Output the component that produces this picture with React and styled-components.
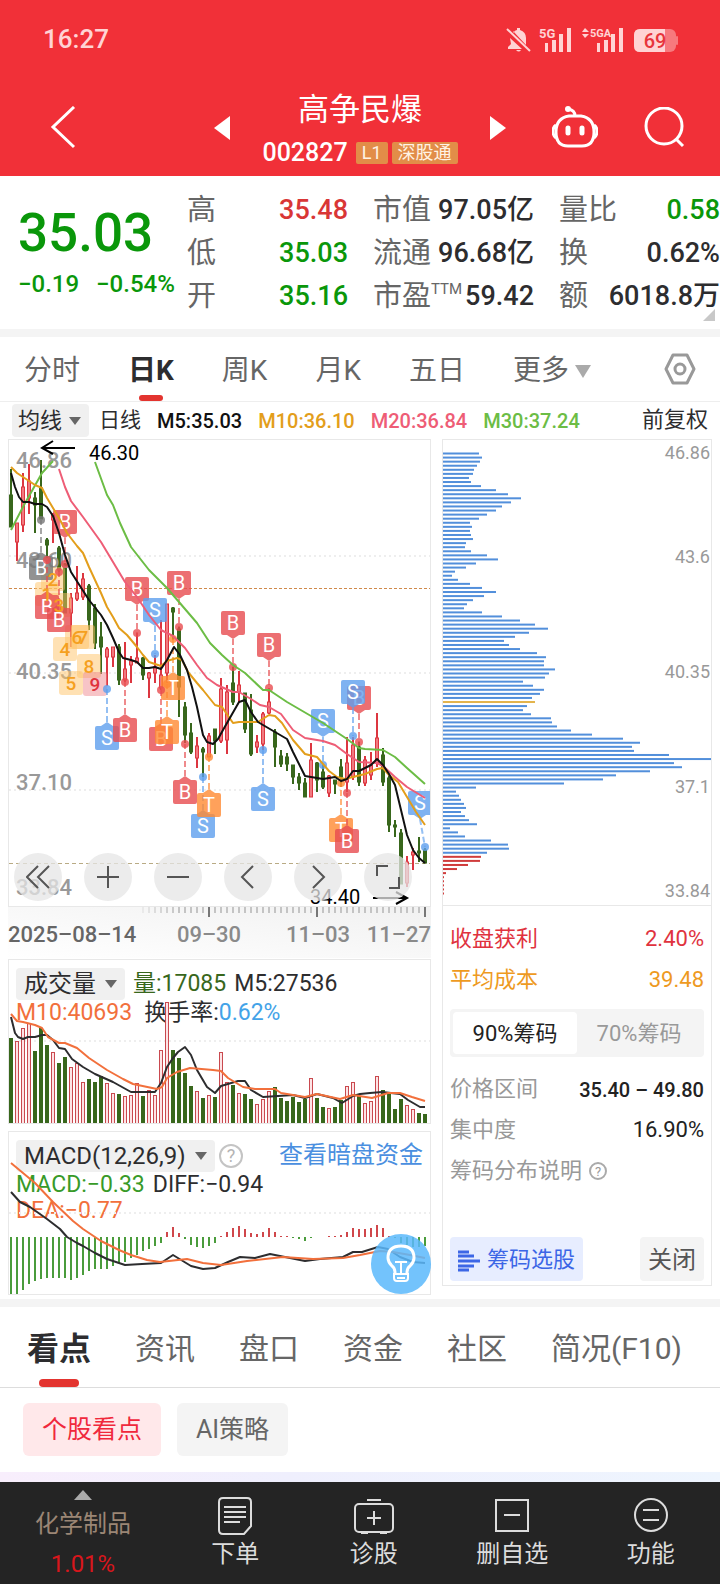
import React from "react";
import styled, { createGlobalStyle } from "styled-components";

const Global = createGlobalStyle`
  *, *::before, *::after { box-sizing: border-box; }
  body { margin: 0; background: #fff; line-height: 1.2; }
  body, button, select { font-family: Roboto, "Noto Sans CJK SC", sans-serif; }
  button, select { border: 0; margin: 0; padding: 0; background: none; color: inherit; line-height: inherit; cursor: pointer; }
  a { text-decoration: none; color: inherit; }
  svg { display: block; }
`;

const C = {
  red: "#d93636",
  green: "#0a970a",
  dark: "#2d2d2f",
  gray: "#666",
  light: "#999",
  orange: "#e39e1b",
  coral: "#f2703c",
  pink: "#ee5d76",
  lime: "#6cbd45",
  candle: "#38671c",
};

const Page = styled.div`
  width: 100%;
  color: ${C.dark};
`;

/* ---------- header ---------- */

const Header = styled.header`
  background: #f13038;
  color: #fff;
  height: 176px;
`;

const StatusBar = styled.div`
  height: 80px;
  padding: 0 42px 0 43px;
  display: flex;
  align-items: center;
  justify-content: space-between;
  font-size: 26px;
  font-weight: 500;
  color: #ffd3d4;
`;

const NavBar = styled.nav`
  display: grid;
  grid-template-columns: 1fr 260px 1fr;
  height: 96px;
`;

const NavSide = styled.div`
  display: flex;
  align-items: center;
  justify-content: space-between;
  padding: ${(p) => p.$pad};
`;

const IconButton = styled.button`
  display: flex;
  align-items: center;
  justify-content: center;
`;

const TitleBlock = styled.div`
  display: flex;
  flex-direction: column;
  align-items: center;
  padding-top: 9px;
`;

const Title = styled.h1`
  margin: 0;
  font-size: 31px;
  line-height: 42px;
  font-weight: 400;
`;

const CodeLine = styled.div`
  display: flex;
  align-items: center;
  gap: 4px;
  height: 44px;
  font-size: 25px;
  font-weight: 500;
`;

const Badge = styled.span`
  height: 22px;
  line-height: 22px;
  padding: 0 6px;
  border-radius: 2px;
  background: #e28d48;
  color: #fff3e4;
  font-size: 18px;
  font-weight: 400;
  &:first-of-type { margin-left: 4px; }
`;

/* ---------- quote ---------- */

const Quote = styled.section`
  position: relative;
  display: grid;
  grid-template-columns: 169px 1fr;
  padding: 13px 0 11px 18px;
`;

const PriceBlock = styled.div`
  color: ${C.green};
  font-weight: 500;
  padding-top: 13px;
`;

const Price = styled.div`
  font-size: 53px;
  line-height: 62px;
`;

const Change = styled.div`
  display: flex;
  gap: 17px;
  font-size: 24px;
  line-height: 40px;
`;

const Stats = styled.dl`
  margin: 0;
  display: grid;
  grid-template-columns: repeat(3, 1fr);
  column-gap: 25px;
`;

const Stat = styled.div`
  display: flex;
  justify-content: space-between;
  align-items: center;
  height: 43px;
  white-space: nowrap;
`;

const StatName = styled.dt`
  display: flex;
  font-size: 29px;
  color: ${C.gray};
  sup { font-size: 15px; line-height: 20px; }
`;

const StatValue = styled.dd`
  margin: 0;
  font-size: 27px;
  font-weight: 500;
  color: ${(p) => p.$color || C.dark};
`;

const Corner = styled.i`
  position: absolute;
  right: 5px;
  bottom: 8px;
  border: 6px solid transparent;
  border-right-color: #c8c8c8;
  border-bottom-color: #c8c8c8;
`;

const Band = styled.div`
  height: 8px;
  background: #f4f4f4;
`;

/* ---------- tabs ---------- */

const Tabs = styled.div`
  display: flex;
  align-items: stretch;
  gap: ${(p) => p.$gap};
  height: ${(p) => p.$height};
  padding: 0 24px 0 ${(p) => p.$left};
  border-bottom: 1px solid ${(p) => p.$line};
`;

const Tab = styled.button`
  position: relative;
  display: flex;
  align-items: center;
  gap: 6px;
  padding-top: 4px;
  font-size: ${(p) => p.$size};
  font-weight: ${(p) => (p.$active ? 700 : 400)};
  color: ${(p) => (p.$active ? C.dark : C.gray)};
  white-space: nowrap;
  ${(p) =>
    p.$active &&
    `&::after {
      content: "";
      position: absolute;
      left: 50%;
      bottom: 0;
      width: ${p.$bar};
      height: ${p.$thick};
      margin-left: calc(${p.$bar} / -2);
      border-radius: 4px;
      background: #e3342f;
    }`}
`;

const Settings = styled(IconButton)`
  margin-left: auto;
`;

/* ---------- indicator line ---------- */

const MaLine = styled.div`
  display: flex;
  align-items: center;
  height: 37px;
  padding: 0 12px;
  gap: 16px;
  font-size: 20px;
  font-weight: 500;
  white-space: nowrap;
`;

const MaName = styled.span`
  font-size: ${(p) => (p.$end ? "22px" : "21px")};
  font-weight: 400;
  margin-left: ${(p) => (p.$end ? "auto" : "-6px")};
`;

const Tint = styled.span`
  color: ${(p) => p.$color};
`;

const PickerBox = styled.span`
  position: relative;
  display: inline-flex;
  align-items: center;
  height: ${(p) => p.$height};
  border-radius: 4px;
  background: #f0f0f0;
  &::after {
    content: "";
    position: absolute;
    right: 8px;
    border: 6px solid transparent;
    border-top: 8px solid #666;
    border-bottom: 0;
    pointer-events: none;
  }
`;

const PickerSelect = styled.select`
  appearance: none;
  height: 100%;
  padding: 2px ${(p) => p.$right} 0 ${(p) => p.$left};
  font-size: ${(p) => p.$size};
  color: ${C.dark};
`;

const Picker = ({ label, options, height = "32px", size = "24px", left = "8px", right = "29px" }) => (
  <PickerBox $height={height}>
    <PickerSelect aria-label={label} $size={size} $left={left} $right={right}>
      {options.map((o) => (
        <option key={o}>{o}</option>
      ))}
    </PickerSelect>
  </PickerBox>
);

/* ---------- chart area ---------- */

const Charts = styled.main`
  display: grid;
  grid-template-columns: 423fr 270fr;
  gap: 11px;
  align-items: start;
  padding: 0 8px 4px;
`;

const Column = styled.div`
  min-width: 0;
`;

const Panel = styled.section`
  position: relative;
  border: 1px solid #e8e8e8;
  margin-bottom: ${(p) => p.$gap || "0"};
`;

const Plot = styled.svg`
  width: 100%;
  height: auto;
  position: relative;
  pointer-events: none;
  font-family: Roboto, "Noto Sans CJK SC", sans-serif;
`;

const Controls = styled.div`
  position: absolute;
  left: 5px;
  bottom: 5px;
  display: flex;
  gap: 22px;
`;

const RoundButton = styled.button`
  width: 48px;
  height: 48px;
  border-radius: 50%;
  background: rgba(230, 230, 230, 0.75);
  display: flex;
  align-items: center;
  justify-content: center;
`;

const Legend = styled.div`
  position: absolute;
  left: 7px;
  right: 7px;
  top: 7px;
  font-size: 23px;
  white-space: nowrap;
`;

const LegendRow = styled.div`
  display: flex;
  align-items: center;
  gap: ${(p) => p.$gap};
  height: ${(p) => (p.$head ? "33px" : "26px")};
`;

const MoreLink = styled.a`
  margin-left: auto;
  font-size: 24px;
  color: #4a8fe0;
`;

const Help = styled.button`
  width: 24px;
  height: 24px;
  line-height: 1;
  border: 2px solid #c4c4c4;
  border-radius: 50%;
  color: #b4b4b4;
  font-size: 18px;
`;

const Bulb = styled.button`
  position: absolute;
  right: -1px;
  bottom: 0;
  width: 60px;
  height: 60px;
  border-radius: 50%;
  background: rgba(91, 184, 252, 0.85);
  display: flex;
  align-items: center;
  justify-content: center;
`;

/* ---------- chip distribution ---------- */

const Info = styled.div`
  border-top: 1px solid #e8e8e8;
  padding: 13px 7px 4px;
  font-size: 22px;
`;

const InfoRow = styled.div`
  display: flex;
  align-items: center;
  justify-content: space-between;
  height: 41px;
  color: ${(p) => p.$color || C.light};
`;

const InfoValue = styled.span`
  color: ${(p) => p.$color || "inherit"};
  font-weight: ${(p) => (p.$bold ? 500 : 400)};
  font-size: ${(p) => (p.$bold ? "20px" : "22px")};
`;

const Segment = styled.div`
  display: flex;
  height: 48px;
  margin: 8px 0 12px;
  padding: 3px;
  border-radius: 4px;
  background: #f4f4f4;
`;

const SegmentButton = styled.button`
  flex: 1;
  padding-top: 2px;
  border-radius: 4px;
  font-size: 22px;
  background: ${(p) => (p.$active ? "#fff" : "transparent")};
  color: ${(p) => (p.$active ? "#222" : C.light)};
`;

const HelpLink = styled.a`
  display: flex;
  align-items: center;
  gap: 6px;
`;

const Actions = styled.div`
  display: flex;
  justify-content: space-between;
  margin-top: 45px;
`;

const ActionButton = styled.button`
  display: flex;
  align-items: center;
  gap: 7px;
  height: 44px;
  padding: 3px 8px 0;
  border-radius: 4px;
  background: ${(p) => (p.$primary ? "#e7edff" : "#f4f4f4")};
  color: ${(p) => (p.$primary ? "#3c66e6" : "#555")};
  font-size: ${(p) => (p.$primary ? "22px" : "24px")};
`;

/* ---------- lower page ---------- */

const Chips = styled.div`
  display: flex;
  gap: 16px;
  padding: 15px 23px 16px;
`;

const Chip = styled.button`
  height: 53px;
  padding: 0 19px;
  border-radius: 6px;
  font-size: 25px;
  background: ${(p) => (p.$active ? "#ffe8ea" : "#f4f4f4")};
  color: ${(p) => (p.$active ? "#f0283c" : C.gray)};
`;

const Glow = styled.div`
  height: 10px;
  background: linear-gradient(90deg, #f8eefc, #efeffd 40%, #eef5fe);
`;

const BottomBar = styled.nav`
  display: grid;
  grid-template-columns: 166px repeat(4, 1fr);
  height: 102px;
  background: #242424;
`;

const BottomItem = styled.button`
  display: flex;
  flex-direction: column;
  align-items: center;
  padding-top: 15px;
  gap: 3px;
  font-size: 24px;
  line-height: 32px;
  color: #dcdcdc;
`;

const Sector = styled(BottomItem)`
  padding-top: 8px;
  gap: 8px;
  color: #9b8675;
`;

const SectorArrow = styled.i`
  border: 9px solid transparent;
  border-top: 0;
  border-bottom: 10px solid #aaa;
`;

/* ---------- data ---------- */

const STATS = [
  ["高", "35.48", C.red], ["市值", "97.05亿"], ["量比", "0.58", C.green],
  ["低", "35.03", C.green], ["流通", "96.68亿"], ["换", "0.62%"],
  ["开", "35.16", C.green], [<>市盈<sup>TTM</sup></>, "59.42"], ["额", "6018.8万"],
];

/* up flag, high, low, body top, body bottom */
const CANDLES = [
  [0,469,527,495,527],[1,523,561,523,542],[1,473,532,487,525],[1,464,514,481,498],[0,492,533,498,505],
  [0,460,519,488,519],[0,538,558,540,545],[1,513,543,515,520],[0,546,572,548,570],[0,563,613,564,613],
  [1,593,647,598,613],[1,566,601,593,599],[1,573,600,579,597],[0,584,630,586,620],[0,604,649,608,643],
  [0,622,674,637,647],[1,647,686,649,657],[1,647,667,647,657],[0,644,685,647,680],[1,642,682,669,680],
  [1,656,683,661,665],[1,633,663,658,663],[0,657,680,658,675],[1,672,698,673,678],[1,655,683,667,673],
  [1,620,690,675,688],[1,604,683,604,673],[0,607,640,608,612],[0,627,717,629,687],[0,702,743,707,735],
  [0,723,754,733,752],[1,737,768,746,758],[0,747,777,749,752],[1,733,757,736,757],[0,729,754,729,741],
  [1,678,743,689,741],[1,685,754,692,740],[0,667,705,683,702],[1,671,703,685,692],[0,693,733,693,729],
  [0,694,756,710,754],[1,735,753,742,747],[1,712,750,714,744],[1,688,714,702,713],[0,729,767,732,747],
  [0,750,767,756,764],[0,753,771,757,764],[0,765,784,765,777],[0,773,790,777,783],[0,778,797,783,797],
  [1,743,797,760,797],[0,762,792,763,780],[0,765,789,772,787],[1,775,797,776,793],[0,780,794,780,784],
  [0,759,787,767,777],[1,737,792,763,782],[1,737,780,745,777],[0,742,786,747,782],[1,756,786,760,783],
  [1,752,780,765,775],[1,713,767,738,763],[0,748,786,755,782],[0,775,832,778,825],[0,820,837,825,827],
  [0,829,884,833,884],[1,856,887,862,883],[1,848,870,852,855],[0,837,862,851,853],[0,848,863,850,863],
];

const MA5 = "11,473 15,487 19,497 23,502 29,502 35,504 42,504 47,507 53,516 59,533 65,555 71,572 80,586 89,600 101,615 107,625 113,638 119,652 123,658 131,660 137,662 143,668 149,668 155,667 161,669 167,660 174,647 180,655 187,670 192,687 197,707 203,735 207,742 213,744 218,739 223,730 239,702 245,700 251,712 258,722 263,725 275,732 287,739 293,752 305,776 311,777 323,779 335,777 341,781 347,779 353,771 359,771 371,765 377,759 383,765 389,774 395,785 401,810 407,835 413,850 419,858 425,863";
const MA10 = "11,467 17,473 29,481 35,485 42,488 47,498 53,508 59,518 67,533 77,546 83,553 89,567 95,580 101,593 107,607 113,617 119,628 127,635 137,647 143,655 149,662 161,666 167,661 177,658 182,660 188,672 197,683 203,690 215,705 222,707 233,723 239,722 258,722 269,715 275,716 282,723 293,740 305,754 317,757 329,771 337,777 345,779 353,777 365,774 377,769 383,768 389,775 398,782 407,797 416,812 425,825";
const MA20 = "59,469 65,487 71,501 83,517 101,542 113,562 125,582 137,597 149,615 161,630 173,636 185,648 197,665 207,678 217,685 233,692 239,692 251,699 260,705 269,707 281,714 293,730 305,738 323,741 335,745 347,754 359,762 377,763 383,766 395,777 407,787 425,798";
const MA30 = "95,462 107,495 113,505 120,523 131,547 149,570 167,588 179,602 197,623 210,643 222,655 233,665 245,673 263,690 269,690 287,702 323,723 347,739 359,748 365,749 383,750 395,757 407,768 425,784";

const TONES = { r: "#e84c50", b: "#5e9fee", o: "#ff8a33", g: "#777" };

/* letter, tone, tag x, tag y, dot x, dot y */
const MARKERS = [
  ["B","g",41,568,41,520],["B","r",65,522,65,564],["B","r",47,607,47,560],["B","r",59,620,59,572],
  ["B","r",137,589,137,633],["S","b",155,610,155,654],["B","r",179,583,179,627],["T","o",173,688,173,639],
  ["B","r",233,623,233,667],["B","r",269,645,269,688],["S","b",107,738,107,689],["B","r",125,730,125,682],
  ["B","r",161,739,161,690],["T","o",167,732,167,684],["B","r",185,792,185,744],["S","b",203,826,203,777],
  ["T","o",209,805,209,757],["S","b",263,799,263,750],["S","b",323,721,323,765],["B","r",359,698,359,742],
  ["S","b",353,692,353,736],["T","o",341,830,341,783],["B","r",347,841,347,793],["S","b",420,803,425,847],
];

const COUNTS = [
  [2,53,579],[1,47,594],[3,59,605],[4,65,649],[6,77,637],[7,83,637],[8,89,666],[5,71,683],[9,95,684],
];

const VOLUME_TOPS = [
  1038,1041,1028,1023,1051,1028,1045,1052,1063,1057,1067,1063,1082,1079,1082,1076,1083,1093,1094,1096,
  1095,1083,1096,1090,1095,1050,1002,1050,1058,1073,1086,1091,1098,1095,1097,1052,1082,1085,1093,1094,
  1099,1104,1099,1091,1087,1098,1101,1097,1102,1099,1078,1098,1107,1108,1107,1100,1086,1082,1096,1103,
  1101,1076,1090,1092,1109,1099,1105,1109,1113,1114,
];
const VOLUME_UP = "0111000100111000110111011110000101011010011100000010010011011100001100";
const VOL5 = "11,1017 15,1033 18,1037 23,1039 28,1037 35,1037 42,1035 47,1035 53,1040 59,1048 65,1049 72,1059 83,1067 95,1074 113,1082 131,1092 155,1092 161,1083 167,1067 173,1058 178,1052 185,1047 191,1055 197,1070 207,1087 215,1093 221,1086 238,1081 245,1081 251,1090 263,1097 293,1095 305,1098 317,1094 333,1098 342,1103 353,1096 360,1094 370,1093 382,1092 400,1094 408,1100 420,1107 425,1107";
const VOL10 = "11,1014 17,1021 23,1022 35,1025 42,1028 48,1037 59,1043 65,1043 77,1048 89,1058 107,1070 123,1079 133,1084 157,1089 162,1087 167,1078 177,1072 190,1068 213,1070 221,1071 228,1078 243,1087 255,1089 275,1089 281,1093 305,1097 317,1094 340,1099 353,1095 372,1098 388,1093 400,1093 412,1097 425,1101";

const MACD_ENDS = [
  1294,1294,1290,1284,1281,1279,1278,1278,1278,1278,1280,1278,1275,1271,1269,1269,1269,1266,1263,1262,
  1258,1255,1251,1249,1246,1243,1232,1227,1233,1239,1245,1247,1248,1246,1243,1236,1232,1228,1226,1229,
  1233,1234,1232,1228,1232,1236,1236,1238,1239,1241,1238,1237,1237,1236,1236,1235,1232,1228,1229,1229,
  1228,1225,1228,1236,1238,1243,1245,1247,1247,1246,
];
const DIFF = "11,1192 20,1202 30,1207 47,1219 60,1229 67,1237 77,1243 83,1246 95,1253 107,1259 125,1265 142,1264 161,1263 173,1255 191,1266 203,1269 215,1268 228,1262 240,1257 255,1258 270,1254 285,1257 305,1261 320,1259 343,1257 353,1252 362,1252 378,1247 388,1249 400,1257 413,1262 425,1263";
const DEA = "11,1163 35,1183 53,1202 73,1221 83,1229 101,1241 119,1250 131,1255 147,1260 160,1262 187,1259 203,1263 221,1265 247,1261 283,1257 313,1259 343,1258 360,1255 380,1251 393,1252 410,1255 425,1258";

const CHIP_WIDTHS = [
  37,40,38,35,32,31,27,29,39,54,66,79,69,60,54,45,37,28,30,28,29,31,24,23,29,45,56,34,24,13,
  10,16,28,40,54,42,31,25,22,40,60,78,93,106,87,73,62,67,78,95,104,102,102,113,107,103,81,91,102,98,
  90,93,85,81,89,109,110,115,129,150,181,198,190,192,227,269,232,240,208,174,161,122,34,14,17,19,22,24,19,23,
  27,35,8,16,23,49,66,67,45,39,38,26,15,4,2,2,2,2,2,
];

const x = (i) => 11 + 6 * i;

/* ---------- drawings ---------- */

const Line = ({ points, color, width = 2 }) => (
  <polyline points={points} fill="none" stroke={color} strokeWidth={width} strokeLinejoin="round" />
);

const Signal = ({ left }) => (
  <g fill="#ffd3d4">
    <rect x={left} y="43" width="3" height="9" />
    <rect x={left + 7} y="40" width="4" height="12" />
    <rect x={left + 14} y="34" width="4" height="18" />
    <rect x={left + 22} y="28" width="4" height="24" />
  </g>
);

const StatusIcons = () => (
  <svg width="174" height="28" viewBox="504 26 174 28" aria-label="69%">
    <g fill="#ffd3d4">
      <path d="M513 33q2-3 4-3v-2h3v2q6 2 6 8v7l-13-14zM510 38l12 11H508v-2l3-3zM516 50h5q-2 3-5 0z" />
      <path d="M507 29l23 22" stroke="#ffd3d4" strokeWidth="2" />
      <path d="M582 32l3-4 4 4zM582 34l3 4 4-4z" />
    </g>
    <g fill="#ffd3d4" fontWeight="700" fontFamily="Roboto, sans-serif">
      <text x="539" y="38" fontSize="13">5G</text>
      <text x="590" y="37" fontSize="11">5GA</text>
    </g>
    <Signal left={545} />
    <Signal left={597} />
    <rect x="634" y="29" width="42" height="23" rx="6" fill="#f7797d" />
    <rect x="676" y="36" width="2" height="9" rx="1" fill="#f7797d" />
    <path d="M640 29h25v23h-25q-6 0-6-6V35q0-6 6-6z" fill="#ffd3d4" />
    <text x="655" y="48" textAnchor="middle" fontSize="20" fontWeight="500" fill="#e8353c" fontFamily="Roboto, sans-serif">69</text>
  </svg>
);

const Marker = ({ data: [letter, tone, tx, ty, dx, dy] }) => {
  const down = dy > ty;
  const edge = down ? ty + 12 : ty - 12;
  const tip = down ? edge + 4 : edge - 4;
  return (
    <g fill={TONES[tone]}>
      <line x1={tx} y1={tip} x2={dx} y2={dy} stroke={TONES[tone]} strokeWidth="2" strokeDasharray="6 3" opacity="0.65" />
      <circle cx={dx} cy={dy} r="4" opacity="0.8" />
      <g opacity="0.8">
        <rect x={tx - 12} y={ty - 12} width="24" height="24" rx="2" />
        <path d={`M${tx - 6} ${edge}L${tx} ${tip}L${tx + 6} ${edge}z`} />
      </g>
      <text x={tx} y={ty + 7} textAnchor="middle" fontSize="20" fill="#fff">{letter}</text>
    </g>
  );
};

const Kline = () => (
  <Plot viewBox="9 440 421 466">
    <g stroke="#eee" strokeWidth="2" strokeDasharray="2 3">
      <path d="M9 556H430M9 673H430M9 790H430" />
    </g>
    <path d="M9 588.500H430" stroke="#d08a4a" strokeDasharray="3 2" />
    <path d="M9 863.500H430" stroke="#b9ab84" strokeDasharray="4 3" />
    {CANDLES.map(([up, hi, lo, top, bottom], i) => (
      <g key={i} stroke={up ? "#dc3640" : C.candle}>
        <line x1={x(i)} x2={x(i)} y1={hi} y2={lo} strokeWidth="2" />
        <rect
          x={x(i) - 1.5} y={top} width="3" height={Math.max(bottom - top, 1)}
          fill={up ? "#f07a80" : C.candle} strokeWidth="1"
        />
      </g>
    ))}
    <g fontSize="22" fontWeight="500" fill="#999">
      <text x="16" y="468">46.86</text>
      <text x="16" y="568">43.60</text>
      <text x="16" y="679">40.35</text>
      <text x="16" y="790">37.10</text>
      <text x="16" y="895">33.84</text>
    </g>
    {COUNTS.map(([n, cx, cy]) => (
      <rect key={n} x={cx - 12} y={cy - 12} width="24" height="24" rx="3" fill={n === 9 ? "#f08a90" : "#ffc368"} opacity="0.5" />
    ))}
    {MARKERS.map((m, i) => <Marker key={i} data={m} />)}
    <g fontSize="19" fontWeight="500" textAnchor="middle">
      {COUNTS.map(([n, cx, cy]) => (
        <text key={n} x={cx} y={cy + 7} fill={n === 9 ? "#e0343c" : "#f5a01f"}>{n}</text>
      ))}
    </g>
    <Line points="11,530 24,505 42,473 53,461" color={C.lime} />
    <Line points={MA30} color={C.lime} />
    <Line points={MA20} color={C.pink} />
    <Line points={MA10} color={C.orange} />
    <Line points={MA5} color="#111" />
    <g stroke="#000" strokeWidth="2" fill="none">
      <path d="M75 448H42M53 441L42 448L53 454" />
      <path d="M373 898H407M396 892L407 898L396 904" />
    </g>
    <g fontSize="20" fill="#000">
      <text x="89" y="460">46.30</text>
      <text x="310" y="904">34.40</text>
    </g>
  </Plot>
);

const DateAxis = () => (
  <Plot viewBox="8 907 423 52">
    <defs>
      <linearGradient id="axisShade" x1="0" x2="1" y1="1" y2="0">
        <stop offset="0" stopColor="#fff" />
        <stop offset="1" stopColor="#f1f1f1" />
      </linearGradient>
    </defs>
    <rect x="8" y="907" width="423" height="51" fill="url(#axisShade)" />
    {Array.from({ length: 48 }, (_, k) => k + 22).map((i) => {
      const major = i === 33 || i === 51 || i === 69;
      return (
        <line
          key={i} x1={x(i)} x2={x(i)} y1="907" y2={major ? 917 : 913} strokeWidth="2"
          stroke={major ? "#777" : "#c4c4c4"} opacity={Math.min(1, (i - 20) / 8)}
        />
      );
    })}
    <g fontSize="22" fontWeight="500" fill="#8a8a8a">
      <text x="8" y="942" fill="#666">2025–08–14</text>
      <text x="209" y="942" textAnchor="middle">09–30</text>
      <text x="318" y="942" textAnchor="middle">11–03</text>
      <text x="431" y="942" textAnchor="end">11–27</text>
    </g>
  </Plot>
);

const VolumePlot = () => (
  <Plot viewBox="9 960 421 163">
    <path d="M9 1041H430" stroke="#eee" strokeWidth="2" strokeDasharray="2 3" />
    {VOLUME_TOPS.map((top, i) =>
      VOLUME_UP[i] === "1" ? (
        <rect key={i} x={x(i) - 1.5} y={top + 0.5} width="3" height={1123 - top} fill="#fde4e6" stroke="#c9494f" />
      ) : (
        <rect key={i} x={x(i) - 2} y={top} width="4" height={1123 - top} fill={C.candle} />
      )
    )}
    <Line points={VOL5} color="#2d2d2f" />
    <Line points={VOL10} color={C.coral} />
  </Plot>
);

const MacdPlot = () => (
  <Plot viewBox="9 1132 421 162">
    <path d="M9 1213H430" stroke="#eee" strokeWidth="2" strokeDasharray="2 3" />
    {MACD_ENDS.map((end, i) => (
      <line key={i} x1={x(i)} x2={x(i)} y1="1237" y2={end} strokeWidth="2" stroke={end < 1237 ? "#d0474b" : "#4a9c3c"} />
    ))}
    <Line points={DIFF} color="#2d2d2f" />
    <Line points={DEA} color={C.coral} />
  </Plot>
);

const ChipPlot = () => (
  <Plot viewBox="443 440 268 465">
    {CHIP_WIDTHS.map((w, i) => (
      <rect
        key={i} x="442" y={452.5 + i * 4.074} width={w} height="2"
        fill={i === 61 ? "#e3b44c" : i > 98 ? "#d03c3c" : "#528fdb"}
      />
    ))}
    <g fontSize="18" fill="#999" textAnchor="end">
      <text x="710" y="459">46.86</text>
      <text x="710" y="563">43.6</text>
      <text x="710" y="678">40.35</text>
      <text x="710" y="793">37.1</text>
      <text x="710" y="897">33.84</text>
    </g>
  </Plot>
);

const Glyph = ({ d, size = 24, color = "#555", width = 2 }) => (
  <svg width={size} height={size} viewBox="0 0 24 24" fill="none" stroke={color} strokeWidth={width}>
    <path d={d} />
  </svg>
);

const CONTROLS = [
  ["更早", "M12 1L1 12L12 23M23 1L12 12L23 23"],
  ["放大", "M12 1V23M1 12H23"],
  ["缩小", "M1 12H23"],
  ["左移", "M17 1L6 12L17 23"],
  ["右移", "M7 1L18 12L7 23"],
  ["全屏", "M1 11V1H12M23 12V23H13"],
];

const BOTTOM = [
  ["下单", <svg width="34" height="38" viewBox="0 0 34 38" fill="none" stroke="#dcdcdc" strokeWidth="2">
    <path d="M5 1H29Q33 1 33 5V29L26 37H5Q1 37 1 33V5Q1 1 5 1zM6 10H28M6 15H28M6 20H28M6 25H22" />
  </svg>],
  ["诊股", <svg width="40" height="38" viewBox="0 0 40 38" fill="none" stroke="#dcdcdc" strokeWidth="2">
    <path d="M13 3H27M13 21H27M20 14V28M7 36H14M26 36H33" />
    <rect x="1" y="7" width="38" height="28" rx="4" />
  </svg>],
  ["删自选", <svg width="34" height="38" viewBox="0 0 34 38" fill="none" stroke="#dcdcdc" strokeWidth="2">
    <rect x="1" y="3" width="32" height="31" />
    <path d="M9 18H25" />
  </svg>],
  ["功能", <svg width="36" height="38" viewBox="0 0 36 38" fill="none" stroke="#dcdcdc" strokeWidth="2">
    <circle cx="18" cy="18" r="16" />
    <path d="M10 13H26M10 23H26" />
  </svg>],
];

export default function App() {
  return (
    <Page>
      <Global />
      <Header>
        <StatusBar>
          <span>16:27</span>
          <StatusIcons />
        </StatusBar>
        <NavBar>
          <NavSide $pad="0 0 0 50px">
            <IconButton aria-label="返回">
              <svg width="26" height="44" viewBox="0 0 26 44" fill="none" stroke="#fff" strokeWidth="3">
                <path d="M24 1L3 21L24 41" />
              </svg>
            </IconButton>
            <IconButton aria-label="上一只">
              <svg width="16" height="24" viewBox="0 0 16 24"><path d="M16 0V24L0 12z" fill="#fff" /></svg>
            </IconButton>
          </NavSide>
          <TitleBlock>
            <Title>高争民爆</Title>
            <CodeLine>
              002827<Badge>L1</Badge><Badge>深股通</Badge>
            </CodeLine>
          </TitleBlock>
          <NavSide $pad="0 35px 0 0">
            <IconButton aria-label="下一只">
              <svg width="16" height="24" viewBox="0 0 16 24"><path d="M0 0V24L16 12z" fill="#fff" /></svg>
            </IconButton>
            <IconButton aria-label="智能助手">
              <svg width="46" height="44" viewBox="0 0 46 44" fill="none" stroke="#fff" strokeWidth="3">
                <path d="M17 10H29Q42 12 42 26Q42 40 30 40H16Q4 40 4 26Q4 12 17 10zM23 10Q23 4 16 3" />
                <path d="M4 19Q1 21 1 25Q1 30 4 32M42 19Q45 21 45 25Q45 30 42 32" />
                <circle cx="16" cy="3" r="3" fill="#fff" stroke="none" />
                <path d="M16 22V27M30 22V27" strokeWidth="5" strokeLinecap="round" />
              </svg>
            </IconButton>
            <IconButton aria-label="搜索">
              <svg width="42" height="42" viewBox="0 0 42 42" fill="none" stroke="#fff" strokeWidth="3">
                <circle cx="21" cy="19" r="18" />
                <path d="M33 32L40 39" />
              </svg>
            </IconButton>
          </NavSide>
        </NavBar>
      </Header>

      <Quote>
        <PriceBlock>
          <Price>35.03</Price>
          <Change><span>−0.19</span><span>−0.54%</span></Change>
        </PriceBlock>
        <Stats>
          {STATS.map(([name, value, color]) => (
            <Stat key={value}>
              <StatName>{name}</StatName>
              <StatValue $color={color}>{value}</StatValue>
            </Stat>
          ))}
        </Stats>
        <Corner />
      </Quote>
      <Band />

      <Tabs $gap="48px" $height="65px" $left="24px" $line="#eee">
        {["分时", "日K", "周K", "月K", "五日"].map((t) => (
          <Tab key={t} $size="28px" $active={t === "日K"} $bar="24px" $thick="6px">{t}</Tab>
        ))}
        <Tab $size="28px">
          更多
          <svg width="16" height="13" viewBox="0 0 16 13"><path d="M0 0H16L8 13z" fill="#aaa" /></svg>
        </Tab>
        <Settings aria-label="设置">
          <svg width="32" height="32" viewBox="0 0 32 32" fill="none" stroke="#999" strokeWidth="3" strokeLinejoin="round">
            <path d="M9 2H23L30 16L23 30H9L2 16z" />
            <circle cx="16" cy="16" r="5" />
          </svg>
        </Settings>
      </Tabs>

      <MaLine>
        <Picker label="主图指标" options={["均线", "无"]} height="33px" size="22px" left="6px" right="26px" />
        <MaName>日线</MaName>
        <Tint $color="#111">M5:35.03</Tint>
        <Tint $color={C.orange}>M10:36.10</Tint>
        <Tint $color={C.pink}>M20:36.84</Tint>
        <Tint $color={C.lime}>M30:37.24</Tint>
        <MaName $end>前复权</MaName>
      </MaLine>

      <Charts>
        <Column>
          <Panel>
            <Kline />
            <Controls>
              {CONTROLS.map(([label, d]) => (
                <RoundButton key={label} aria-label={label}><Glyph d={d} /></RoundButton>
              ))}
            </Controls>
          </Panel>
          <DateAxis />
          <Panel $gap="7px">
            <Legend>
              <LegendRow $head $gap="8px">
                <Picker label="副图指标一" options={["成交量", "成交额"]} />
                <Tint $color={C.candle}>量:17085</Tint>
                <span>M5:27536</span>
              </LegendRow>
              <LegendRow $gap="12px">
                <Tint $color={C.coral}>M10:40693</Tint>
                <span>换手率:<Tint $color="#43a3e8">0.62%</Tint></span>
              </LegendRow>
            </Legend>
            <VolumePlot />
          </Panel>
          <Panel>
            <Legend>
              <LegendRow $head $gap="4px">
                <Picker label="副图指标二" options={["MACD(12,26,9)", "KDJ(9,3,3)"]} />
                <Help aria-label="指标说明">?</Help>
                <MoreLink href="#funds">查看暗盘资金</MoreLink>
              </LegendRow>
              <LegendRow $gap="8px">
                <Tint $color="#389a28">MACD:−0.33</Tint>
                <span>DIFF:−0.94</span>
              </LegendRow>
              <LegendRow $gap="8px">
                <Tint $color={C.coral}>DEA:−0.77</Tint>
              </LegendRow>
            </Legend>
            <MacdPlot />
            <Bulb aria-label="提示">
              <svg width="30" height="40" viewBox="0 0 30 40" fill="none" stroke="#fff" strokeWidth="3">
                <path d="M9 29Q9 24 6 22Q2 18 2 14Q2 2 15 2Q28 2 28 14Q28 18 24 22Q21 24 21 29" />
                <path d="M8 30H22V34Q22 37 19 37H11Q8 37 8 34zM9 18H21M15 18V29M11 34H19" strokeWidth="2" />
              </svg>
            </Bulb>
          </Panel>
        </Column>

        <Panel>
          <ChipPlot />
          <Info>
            <InfoRow $color="#e0323e">收盘获利<InfoValue>2.40%</InfoValue></InfoRow>
            <InfoRow $color="#ee9a1f">平均成本<InfoValue>39.48</InfoValue></InfoRow>
            <Segment>
              <SegmentButton $active aria-pressed="true">90%筹码</SegmentButton>
              <SegmentButton aria-pressed="false">70%筹码</SegmentButton>
            </Segment>
            <InfoRow>价格区间<InfoValue $bold $color="#222">35.40 – 49.80</InfoValue></InfoRow>
            <InfoRow>集中度<InfoValue $color="#222">16.90%</InfoValue></InfoRow>
            <InfoRow>
              <HelpLink href="#chips">
                筹码分布说明
                <svg width="20" height="20" viewBox="0 0 20 20">
                  <circle cx="10" cy="10" r="8" fill="none" stroke="#aaa" strokeWidth="2" />
                  <text x="10" y="15" textAnchor="middle" fontSize="13" fill="#999">?</text>
                </svg>
              </HelpLink>
            </InfoRow>
            <Actions>
              <ActionButton $primary>
                <svg width="22" height="22" viewBox="0 0 22 22" fill="none" stroke="#3c66e6" strokeWidth="3">
                  <path d="M0 2H11M0 6H16M0 11H22M0 16H16M0 20H11" />
                </svg>
                筹码选股
              </ActionButton>
              <ActionButton>关闭</ActionButton>
            </Actions>
          </Info>
        </Panel>
      </Charts>
      <Band />

      <Tabs $gap="44px" $height="81px" $left="27px" $line="#ddd">
        {["看点", "资讯", "盘口", "资金", "社区", "简况(F10)"].map((t) => (
          <Tab key={t} $size={t === "看点" ? "32px" : "30px"} $active={t === "看点"} $bar="40px" $thick="8px">{t}</Tab>
        ))}
      </Tabs>
      <Chips>
        <Chip $active>个股看点</Chip>
        <Chip>AI策略</Chip>
      </Chips>
      <Glow />

      <BottomBar>
        <Sector>
          <SectorArrow />
          <span>化学制品</span>
          <Tint $color="#d8161c">1.01%</Tint>
        </Sector>
        {BOTTOM.map(([label, icon]) => (
          <BottomItem key={label}>{icon}{label}</BottomItem>
        ))}
      </BottomBar>
    </Page>
  );
}
